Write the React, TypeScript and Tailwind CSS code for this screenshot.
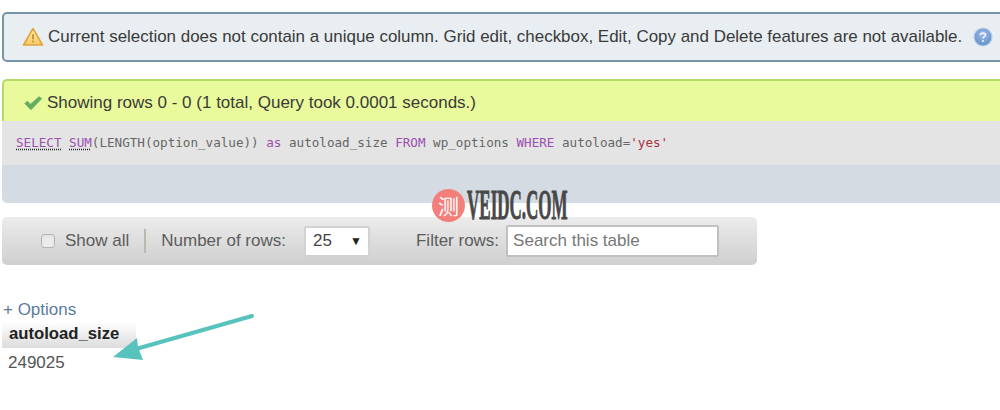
import React from "react";

const sans = { fontFamily: '"Liberation Sans", Arial, sans-serif' };

function WarnIcon() {
  return (
    <svg width="22" height="20" viewBox="0 0 22 20" className="shrink-0">
      <defs>
        <linearGradient id="warn" x1="0" y1="0" x2="0" y2="1">
          <stop offset="0" stopColor="#fdeeb0" />
          <stop offset="1" stopColor="#f6c865" />
        </linearGradient>
      </defs>
      <path d="M11 1.5 L20.5 18 L1.5 18 Z" fill="url(#warn)" stroke="#e0a63c" strokeWidth="1.6" strokeLinejoin="round" />
      <rect x="10" y="7" width="2" height="5.5" rx="0.8" fill="#c9963f" />
      <rect x="10" y="13.5" width="2" height="2" rx="0.8" fill="#c9963f" />
    </svg>
  );
}

function HelpIcon() {
  return (
    <svg width="20" height="20" viewBox="0 0 20 20" className="shrink-0">
      <defs>
        <radialGradient id="help" cx="0.5" cy="0.35" r="0.7">
          <stop offset="0" stopColor="#9cbbe6" />
          <stop offset="1" stopColor="#5f8cc9" />
        </radialGradient>
      </defs>
      <circle cx="10" cy="10" r="9" fill="url(#help)" stroke="#b9cfe9" strokeWidth="1.2" />
      <path d="M7.5 8 C7.5 5.6 12.5 5.6 12.5 8 C12.5 9.6 10 9.6 10 11.4" fill="none" stroke="#eef4fb" strokeWidth="1.7" />
      <circle cx="10" cy="14" r="1.1" fill="#eef4fb" />
    </svg>
  );
}

function CheckIcon() {
  return (
    <svg width="20" height="16" viewBox="0 0 20 16" className="shrink-0">
      <path d="M1.5 8.5 L4.5 6 L7.5 9 L16 1.5 L19 3.5 L8 15 Z" fill="#63ad5c" stroke="#86c07e" strokeWidth="0.6" strokeLinejoin="round" />
    </svg>
  );
}

export default function App() {
  return (
    <div className="relative w-[1000px] h-[410px] overflow-hidden bg-white text-[#444]" style={sans}>
      <div className="flex flex-col pl-[2px] pt-[12px] w-[1012px]">
        <div className="h-[50px] flex items-center pl-[18px] gap-[4px] bg-[#e8eef1] border-2 border-[#7596a9] rounded-[5px] text-[16.95px] text-[#3a3a3a]">
          <WarnIcon />
          <span className="whitespace-nowrap">
            Current selection does not contain a unique column. Grid edit, checkbox, Edit, Copy and Delete features are not available.
          </span>
          <span className="ml-[7px]">
            <HelpIcon />
          </span>
        </div>

        <div className="mt-[17px] h-[42px] flex items-center pl-[19px] pt-[3px] gap-[4px] bg-[#e9fa9c] border-t-2 border-l-2 border-[#b6d96a] rounded-t-[5px] text-[17px] text-[#3a3a3a]">
          <CheckIcon />
          <span className="whitespace-nowrap">Showing rows 0 - 0 (1 total, Query took 0.0001 seconds.)</span>
        </div>
        <div
          className="h-[44px] flex items-center pl-[14px] pt-[1px] bg-[#e4e4e4] text-[12.6px] text-[#666] whitespace-pre"
          style={{ fontFamily: '"DejaVu Sans Mono", monospace' }}
        >
          <span className="text-[#9a50b0] underline decoration-dotted decoration-[#222] underline-offset-2">SELECT</span>
          <span> </span>
          <span className="text-[#9a50b0] underline decoration-dotted decoration-[#222] underline-offset-2">SUM</span>
          <span>(LENGTH(option_value)) </span>
          <span className="text-[#9a50b0]">as</span>
          <span> autoload_size </span>
          <span className="text-[#9a50b0]">FROM</span>
          <span> wp_options </span>
          <span className="text-[#9a50b0]">WHERE</span>
          <span> autoload=</span>
          <span className="text-[#a8323e]">'yes'</span>
        </div>
        <div className="h-[38px] bg-[#d4dbe3] rounded-bl-[5px]" />

        <div className="mt-[14px] w-[755px] h-[48px] flex items-center pl-[39px] bg-gradient-to-b from-[#ececec] to-[#cfcfcf] rounded-[5px] text-[17px] text-[#5c5c5c]">
          <span className="w-[14px] h-[14px] bg-[#ececec] border border-[#b5b5b5] rounded-[3px] shadow-inner" />
          <span className="ml-[10px]">Show all</span>
          <span className="ml-[15px] w-[2px] h-[24px] bg-[#b9b9b0]" />
          <span className="ml-[15px]">Number of rows:</span>
          <span className="ml-[18px] w-[66px] h-[31px] flex items-center justify-between pl-[7px] pr-[6px] bg-white border-2 border-[#d2d2d2] rounded-[2px] text-[#444]">
            25
            <span className="text-[12px] text-[#222]">▼</span>
          </span>
          <span className="ml-[46px]">Filter rows:</span>
          <span className="ml-[7px] w-[213px] h-[32px] flex items-center pl-[5px] bg-white border-2 border-[#c0c0c0] rounded-[2px] text-[#777]">
            Search this table
          </span>
        </div>

        <div className="mt-[35px] ml-[1px] text-[17px] leading-[20px] text-[#5a7d9c]">+ Options</div>
        <div className="mt-[2px] w-[134px] h-[26px] flex items-center pl-[7px] pb-[2px] bg-gradient-to-b from-white to-[#dcdcdc] text-[16.7px] font-bold text-[#222]">
          autoload_size
        </div>
        <div className="mt-[5px] ml-[6px] text-[17px] leading-[20px] text-[#555]">249025</div>
      </div>

      {/* arrow annotation */}
      <svg className="absolute left-0 top-0" width="300" height="380" viewBox="0 0 300 380">
        <path d="M252 316 L136 349" stroke="#58c2bd" strokeWidth="4" strokeLinecap="round" />
        <path d="M113 357 L137 338 L138 347 L143 360 Z" fill="#58c2bd" />
      </svg>

      {/* watermark */}
      <div className="absolute left-[432px] top-[189px] flex items-center">
        <span
          className="w-[33px] h-[33px] rounded-full bg-[#f47f7a] text-white flex items-center justify-center text-[21px]"
          style={{ fontFamily: '"Noto Sans CJK SC", sans-serif' }}
        >
          测
        </span>
        <span
          className="ml-[2px] text-[42px] leading-[33px] font-bold text-[#484848] scale-x-[0.405] origin-left whitespace-nowrap [-webkit-text-stroke:1px_#484848]"
          style={{ fontFamily: '"Liberation Serif", serif' }}
        >
          VEIDC.COM
        </span>
      </div>
    </div>
  );
}
